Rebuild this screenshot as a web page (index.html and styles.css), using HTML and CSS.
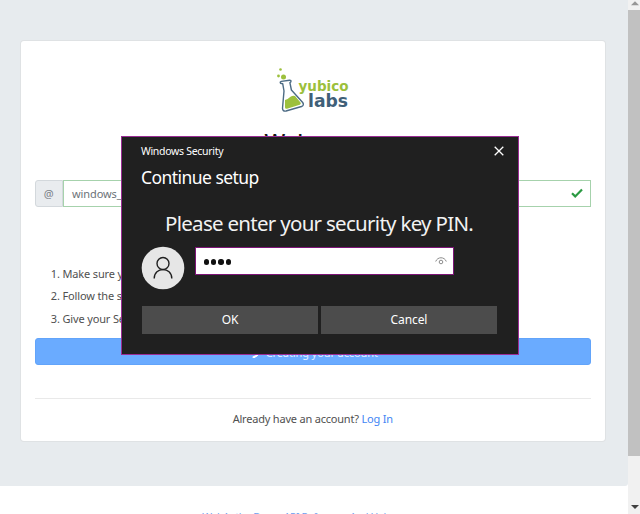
FILE: index.html
```
<!DOCTYPE html>
<html lang="en">
<head>
<meta charset="utf-8">
<title>Yubico Labs</title>
<link rel="stylesheet" href="styles.css">
</head>
<body>
<div class="page">
  <div class="content">
    <main class="hero">
      <section class="card">
        <svg class="logo" viewBox="0 0 76 48" width="76" height="48">
          <circle cx="5.500" cy="3.500" r="1.300" fill="#9cc03c"/>
          <circle cx="3.500" cy="10" r="1.400" fill="#9cc03c"/>
          <circle cx="8.500" cy="11" r="2.500" fill="#9cc03c"/>
          <path d="M5.500 17.200q-.8-1.400.8-1.800l8.300-1.200q1.700 0 1.300 1.500l-1 1 1.500 7.300 11.300 12.500q1.800 2.800-1.200 4L11 45q-3.400.6-3.500-2.700l1.500-17.300-1.300-7.300z" fill="#fff" stroke="#4c6b84" stroke-width="1.400" stroke-linejoin="round"/>
          <path d="M10 34q3-.7 5.500-3.200 2.500-1.600 4.500-.7l5.500 6.400q1 1.500-.7 2.200L12 42.700q-2 .3-2-1.500z" fill="#9cc03c"/>
          <text class="logo-top" x="23.500" y="25" textLength="50" lengthAdjust="spacingAndGlyphs">yubico</text>
          <text class="logo-bottom" x="33" y="40.500" textLength="40" lengthAdjust="spacingAndGlyphs">labs</text>
        </svg>
        <h1>Welcome</h1>
        <div class="field">
          <span class="prefix">@</span>
          <div class="username"><span>windows_user</span>
            <svg viewBox="0 0 12 10" width="12" height="10"><path d="M1 5.300 4.200 8.400 11 1.500" fill="none" stroke="#2a9a42" stroke-width="2.200"/></svg>
          </div>
        </div>
        <ol>
          <li>Make sure your</li>
          <li>Follow the steps</li>
          <li>Give your Security</li>
        </ol>
        <div class="submit"><i class="spinner"></i><span>Creating your account</span></div>
        <hr>
        <p class="login">Already have an account? <a>Log In</a></p>
      </section>
    </main>
    <footer>WebAuthn Demo API Reference And Help</footer>
  </div>
  <div class="scrollbar">
    <svg viewBox="0 0 12 10" width="12" height="10"><path d="M3 5.300h8L7 1.300z" fill="#969696"/></svg>
    <div class="thumb"></div>
    <svg class="down" viewBox="0 0 12 10" width="12" height="10"><path d="M3 1h8L7 5z" fill="#404040"/></svg>
  </div>
</div>
<div class="dialog">
  <div class="titlebar"><span>Windows Security</span>
    <svg viewBox="0 0 10 10" width="10" height="10"><path d="M.7.700l8.600 8.600M9.300.700.700 9.300" stroke="#fff" stroke-width="1.300"/></svg>
  </div>
  <h2>Continue setup</h2>
  <p class="prompt">Please enter your security key PIN.</p>
  <div class="pin-row">
    <svg class="avatar" viewBox="0 0 44 44" width="44" height="44">
      <circle cx="22" cy="22" r="21.300" fill="#e6e6e6"/>
      <circle cx="22" cy="17.500" r="6" fill="none" stroke="#202020" stroke-width="1.400"/>
      <path d="M13.200 32.500c0-11.900 17.600-11.900 17.600 0" fill="none" stroke="#202020" stroke-width="1.400"/>
    </svg>
    <div class="pin">
      <span class="dots"><i></i><i></i><i></i><i></i></span>
      <svg viewBox="0 0 12 8" width="12" height="8"><path d="M.7 4.500C2.500-.5 9.500-.5 11.300 4.500" fill="none" stroke="#8c8c8c"/><circle cx="6" cy="5" r="1.800" fill="none" stroke="#8c8c8c"/></svg>
    </div>
  </div>
  <div class="buttons"><div class="btn">OK</div><div class="btn">Cancel</div></div>
</div>
</body>
</html>
```
FILE: styles.css
```
* { box-sizing: border-box; }
body { margin: 0; font-family: "Noto Sans", "Open Sans", sans-serif; font-size: 11px; color: #505050; background: #fff; }
.page { display: flex; height: 514px; overflow: hidden; }
.content { width: 628px; height: 514px; overflow: hidden; }
.hero { height: 486px; padding: 41px 23px 0 21px; background: #e7ebee; border-radius: 0 0 3px 0; }
.card { height: 400px; padding: 25px 14px 0 13.500px; background: #fff; border-radius: 3px; box-shadow: 0 0 0 1px #dfe2e4; display: flex; flex-direction: column; }
.logo { align-self: center; flex: none; }
.logo-top { font: bold 14.500px "DejaVu Sans", sans-serif; fill: #9cc03c; }
.logo-bottom { font: bold 17px "DejaVu Sans", sans-serif; fill: #3f6078; }
h1 { margin: 11px 0 0; height: 32px; line-height: 32px; font-size: 22px; font-weight: 500; text-align: center; color: #151515; }
.field { display: flex; height: 27px; margin-top: 22.500px; }
.prefix { width: 28.500px; border: 1px solid #d3d8dc; border-radius: 3px 0 0 3px; background: #e9ecef; text-align: center; line-height: 26px; color: #7b8187; }
.username { flex: 1; display: flex; align-items: center; justify-content: space-between; padding: 0 7px 0 8px; border: 1px solid #a6d2ac; color: #6c7278; letter-spacing: -.1px; }
ol { margin: 56px 0 0; padding: 0 0 0 28px; }
li { height: 22.500px; line-height: 22.500px; letter-spacing: -.15px; }
.submit { height: 27px; margin-top: 8px; padding-top: 2px; border: 1px solid #62a4fa; border-radius: 3px; background: #6aabff; color: #e3efff; display: flex; justify-content: center; align-items: center; gap: 7px; letter-spacing: -.1px; }
.spinner { width: 11px; height: 11px; border: 2px solid transparent; border-bottom-color: #fff; border-radius: 50%; transform: rotate(-35deg); }
hr { width: 100%; height: 1px; margin: 33px 0 0; border: 0; background: #e9e9e9; }
.login { margin: 11px 0 0; line-height: 18px; text-align: center; letter-spacing: -.2px; }
.login a { color: #4285f4; }
footer { padding: 23px 40px 0 0; margin-left: 6px; line-height: 16px; text-align: center; color: #6f9ff0; font-size: 10.500px; letter-spacing: -.4px; }
.scrollbar { width: 12px; height: 514px; background: #f1f1f1; display: flex; flex-direction: column; }
.thumb { height: 446px; background: #c1c1c1; }
.down { margin-top: auto; }
.dialog { position: absolute; left: 121px; top: 136px; width: 398px; height: 219px; padding: 0 20px; background: #202020; border: 1px solid #9a2c94; color: #fff; }
.titlebar { display: flex; justify-content: space-between; align-items: center; width: 363px; height: 16px; margin: 6px 0 0 -1px; font-size: 10.500px; letter-spacing: -.3px; }
.titlebar svg { flex: none; }
h2 { margin: 5px 0 0 -1px; font-size: 17.500px; line-height: 26px; font-weight: 400; letter-spacing: -.55px; }
.prompt { margin: 18px 0 0 23px; font-size: 20.500px; line-height: 30px; font-weight: 400; letter-spacing: -.71px; white-space: nowrap; color: #f2f2f2; }
.pin-row { display: flex; margin-top: 7.500px; }
.avatar { margin-left: -1px; }
.pin { width: 259px; height: 28px; margin-left: 9.500px; margin-top: 1px; padding: 0 6px 0 8px; border: 1px solid #7d1477; background: #fff; display: flex; align-items: center; justify-content: space-between; }
.dots { display: flex; gap: 2px; margin-top: 3px; }
.dots i { width: 5.400px; height: 5.400px; border-radius: 50%; background: #111; }
.buttons { display: flex; gap: 3px; margin-top: 16.500px; }
.btn { width: 176px; height: 28px; line-height: 28px; background: #4c4c4c; font-size: 12px; text-align: center; letter-spacing: -.1px; }
```
